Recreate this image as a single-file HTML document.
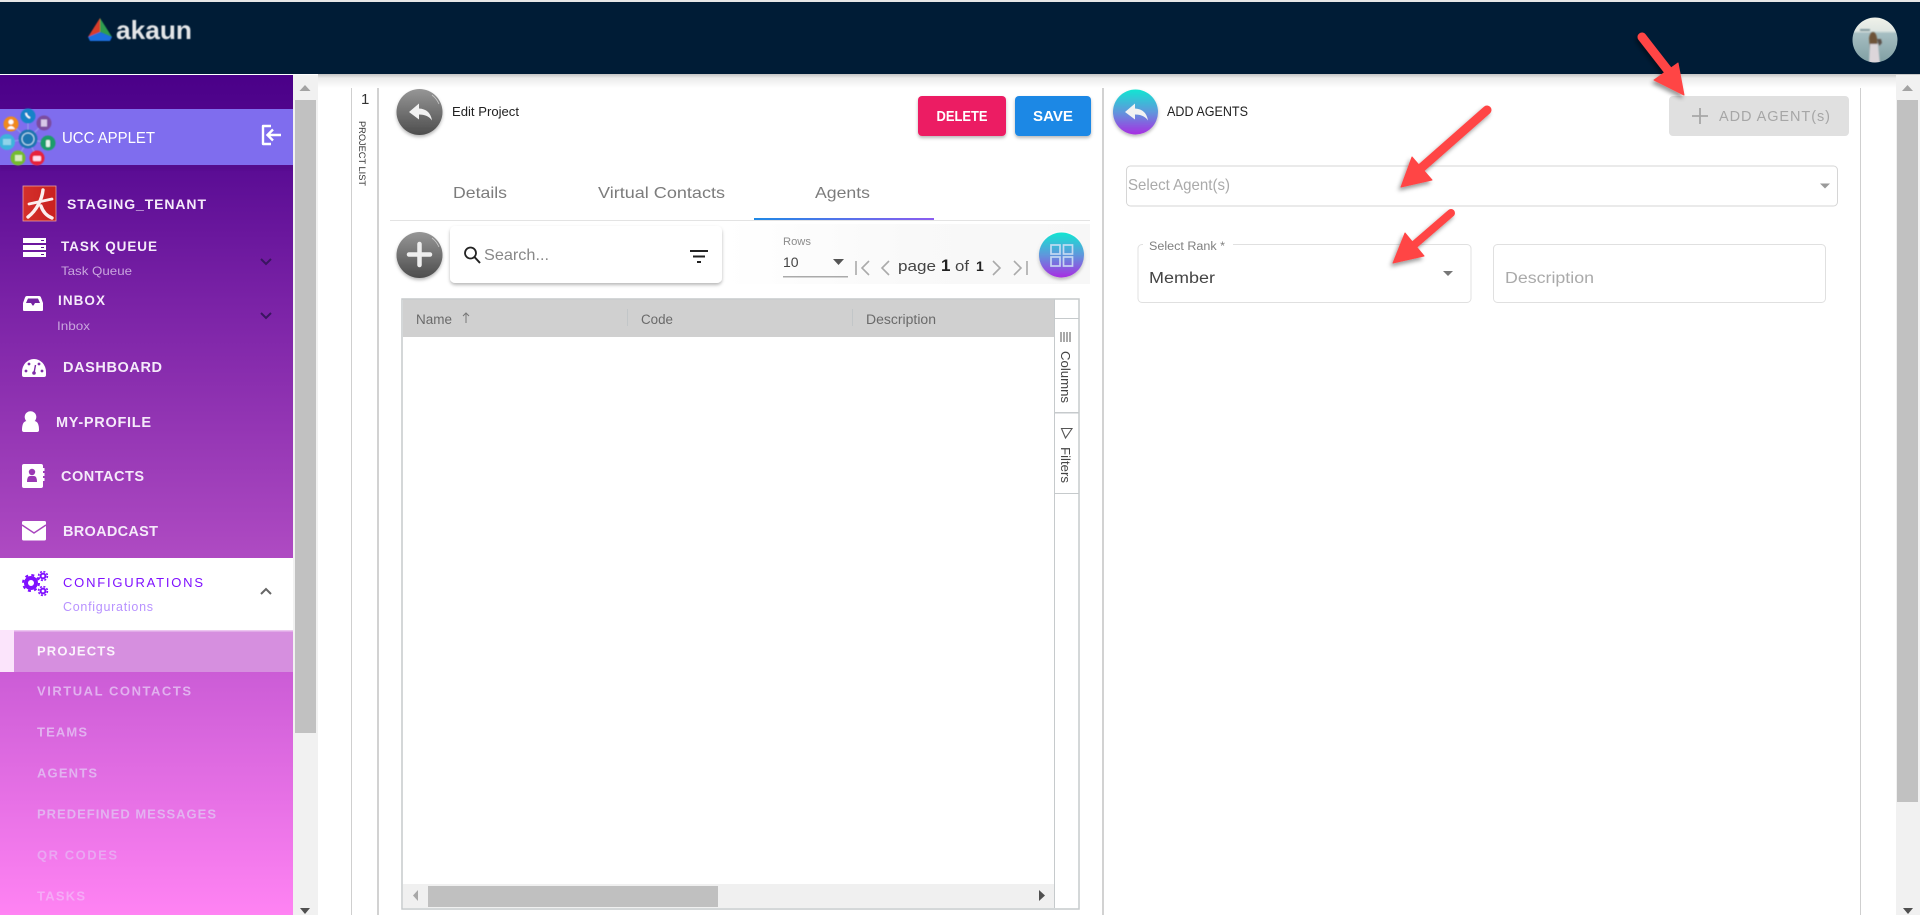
<!DOCTYPE html>
<html><head><meta charset="utf-8"><title>UCC Applet</title>
<style>
html,body{margin:0;padding:0;background:#fff;width:1920px;height:915px;overflow:hidden}
svg{display:block}
text{font-family:"Liberation Sans",sans-serif}
</style></head><body>
<svg xmlns="http://www.w3.org/2000/svg" width="1920" height="915" viewBox="0 0 1920 915">
<defs>
<linearGradient id="side" x1="0" y1="0" x2="0" y2="1">
<stop offset="0" stop-color="#4a0088"/><stop offset=".11" stop-color="#5a0c94"/><stop offset=".27" stop-color="#7a22a6"/><stop offset=".57" stop-color="#ae4ac2"/><stop offset=".71" stop-color="#cb5cd6"/><stop offset="1" stop-color="#ff83f3"/>
</linearGradient>
<linearGradient id="gray" x1="0" y1="0" x2="0" y2="1"><stop offset="0" stop-color="#969696"/><stop offset="1" stop-color="#4d4d4d"/></linearGradient>
<linearGradient id="teal" x1="0" y1="0" x2="0" y2="1"><stop offset="0" stop-color="#12e6d2"/><stop offset=".5" stop-color="#5f97dc"/><stop offset="1" stop-color="#a82ee2"/></linearGradient>
<linearGradient id="tab" x1="0" y1="0" x2="1" y2="0"><stop offset="0" stop-color="#1e88e5"/><stop offset="1" stop-color="#8b5cf0"/></linearGradient>
<linearGradient id="shade" x1="0" y1="0" x2="0" y2="1"><stop offset="0" stop-color="#c4c4c4"/><stop offset=".3" stop-color="#ececec"/><stop offset="1" stop-color="#fff"/></linearGradient>
<linearGradient id="bar" x1="0" y1="0" x2="1" y2="0"><stop offset="0" stop-color="#fff"/><stop offset=".5" stop-color="#f9f9f9"/><stop offset="1" stop-color="#f7f7f7"/></linearGradient>
<linearGradient id="sea" x1="0" y1="0" x2="0" y2="1"><stop offset="0" stop-color="#f0f2ea"/><stop offset=".3" stop-color="#dfe6e2"/><stop offset=".36" stop-color="#a6bec2"/><stop offset="1" stop-color="#7f9ea2"/></linearGradient>
<linearGradient id="redg" x1="0" y1="0" x2="1" y2="0"><stop offset="0" stop-color="#d4302c"/><stop offset="1" stop-color="#c9201e"/></linearGradient>
<filter id="sh" x="-20%" y="-20%" width="140%" height="140%"><feDropShadow dx="0" dy="2" stdDeviation="1.6" flood-color="#000" flood-opacity=".28"/></filter>
<filter id="ash" x="-30%" y="-30%" width="160%" height="160%"><feDropShadow dx="-2" dy="3" stdDeviation="2" flood-color="#000" flood-opacity=".4"/></filter>
<filter id="soft" x="-10%" y="-10%" width="120%" height="120%"><feGaussianBlur stdDeviation=".45"/></filter>
<filter id="softer" x="-10%" y="-10%" width="120%" height="120%"><feGaussianBlur stdDeviation=".9"/></filter>
<clipPath id="av"><circle cx="1875" cy="40" r="22.5"/></clipPath>
</defs>

<!-- top chrome -->
<rect width="1920" height="915" fill="#fff"/>
<rect x="318" y="74" width="1602" height="14" fill="url(#shade)"/>
<rect width="1920" height="2" fill="#e6e6e6"/>
<rect y="2" width="1920" height="72" fill="#001c36"/>

<!-- logo -->
<g filter="url(#soft)">
<path d="M100 18 L88 37 L100 32 Z" fill="#d93c2a"/>
<path d="M100 18 L112 37 L100 32 Z" fill="#2e9e4f"/>
<path d="M100 32 L88 37 L90 41 L110 41 L112 37 Z" fill="#1f6fe0"/>
<text x="116" y="39" font-size="26" font-weight="700" fill="#e4e6e8" textLength="76" lengthAdjust="spacingAndGlyphs">akaun</text>
</g>

<!-- avatar -->
<g clip-path="url(#av)">
<rect x="1852" y="17" width="46" height="46" fill="url(#sea)"/>
<g filter="url(#softer)">
<rect x="1860" y="29" width="10" height="2" fill="#7f979b"/>
<path d="M1869 38 q1-6 4-6 q3 0 4 6 l1 14 l-8 0 z" fill="#6e5238"/>
<path d="M1877 39 h4 l1 4 l-3 3 z" fill="#5a5048"/>
<path d="M1870 44 h8 l2 20 h-11 z" fill="#dcd6da"/>
</g>
</g>

<!-- sidebar -->
<rect x="0" y="75" width="293" height="840" fill="url(#side)"/>
<rect x="0" y="160" width="293" height="10" fill="#4a0a80" opacity=".3" filter="url(#soft)"/>
<rect x="0" y="109" width="293" height="56" fill="#7f6dee"/>

<!-- UCC icon -->
<g filter="url(#soft)">
<g stroke="#9fb6e8" stroke-width="1" opacity=".7">
<line x1="28" y1="139" x2="28" y2="116"/><line x1="28" y1="139" x2="44" y2="123"/><line x1="28" y1="139" x2="48" y2="143"/><line x1="28" y1="139" x2="37" y2="158"/><line x1="28" y1="139" x2="18" y2="158"/><line x1="28" y1="139" x2="7" y2="142"/><line x1="28" y1="139" x2="11" y2="124"/>
</g>
<circle cx="28" cy="139" r="9.5" fill="#1f74b0"/><circle cx="28" cy="139" r="6" fill="none" stroke="#bfe3f5" stroke-width="1"/>
<circle cx="28" cy="116" r="7.5" fill="#1583c8"/><path d="M26 113 q0 3 4 5" stroke="#fff" stroke-width="1.8" fill="none"/>
<circle cx="44" cy="123" r="7.5" fill="#7a4ba0"/><rect x="41" y="119.500" width="6" height="7" fill="#d8c8e8"/>
<circle cx="48" cy="143" r="7.5" fill="#1f9c6a"/><rect x="46" y="140" width="4" height="7" rx="1" fill="#e4f5ec"/>
<circle cx="37" cy="158" r="7.5" fill="#e8203a"/><rect x="33" y="156" width="8" height="5" rx="1" fill="#fde"/>
<circle cx="18" cy="158" r="7.5" fill="#74bc2e"/><rect x="15" y="155" width="7" height="6" fill="#d8ecc0"/>
<circle cx="7" cy="142" r="8" fill="#3cb4dc"/><rect x="3" y="139" width="8" height="6" fill="#90d4ea"/>
<circle cx="11" cy="124" r="7.5" fill="#f08a1c"/><circle cx="11" cy="122" r="2.5" fill="#fff"/><path d="M7 129 q4-6 8 0z" fill="#fff"/>
</g>

<text x="62" y="143" font-size="16" fill="#fff" textLength="93" lengthAdjust="spacingAndGlyphs">UCC APPLET</text>
<!-- logout icon -->
<path d="M271 126 h-8 v18 h8" fill="none" stroke="#fff" stroke-width="2.4" stroke-linejoin="round"/>
<path d="M268 135 h13 M273 129.500 l-5.500 5.500 l5.500 5.500" fill="none" stroke="#fff" stroke-width="2.4"/>

<!-- tenant -->
<rect x="23" y="186" width="33" height="35" fill="url(#redg)"/>
<rect x="23" y="186" width="33" height="35" fill="none" stroke="#e8a0a0" stroke-width=".8"/>
<g fill="none" stroke="#fbeeee" stroke-linecap="round">
<path d="M43 190 C42 199 37 210 28 217" stroke-width="3.400"/>
<path d="M29 204 L52 199" stroke-width="2.800"/>
<path d="M41 206 C43 212 47 216 52 218" stroke-width="3.400"/>
</g>
<text x="67" y="209" font-size="14" font-weight="700" fill="#f5eafa" textLength="139" lengthAdjust="spacing">STAGING_TENANT</text>

<!-- task queue -->
<g fill="#fff"><rect x="23" y="238" width="23" height="5"/><rect x="23" y="245" width="23" height="5"/><rect x="23" y="252" width="23" height="5"/></g>
<g fill="#5d1590"><rect x="41" y="240" width="3" height="1"/><rect x="41" y="247" width="3" height="1"/><rect x="41" y="254" width="3" height="1"/></g>
<text x="61" y="251" font-size="13.5" font-weight="700" fill="#f5eafa" textLength="96" lengthAdjust="spacing">TASK QUEUE</text>
<text x="61" y="275" font-size="12" fill="#c9a6de" textLength="71" lengthAdjust="spacingAndGlyphs">Task Queue</text>
<path d="M261 259 l5 5 l5-5" fill="none" stroke="#3a1560" stroke-width="2"/>

<!-- inbox -->
<path d="M27 296 h12 q1.500 0 2 1.500 l2 5.500 v7 q0 1-1 1 h-18 q-1 0-1-1 v-7 l2-5.500 q.5-1.500 2-1.500 z" fill="#fff"/>
<path d="M28 298.500 h10 l2 4.500 h-5 l-1.500 2.500 h-1 l-1.500-2.500 h-5 z" fill="#7524a2"/>
<text x="58" y="305" font-size="13.5" font-weight="700" fill="#f5eafa" textLength="47" lengthAdjust="spacing">INBOX</text>
<text x="57" y="330" font-size="12" fill="#c9a6de" textLength="33" lengthAdjust="spacingAndGlyphs">Inbox</text>
<path d="M261 313 l5 5 l5-5" fill="none" stroke="#3a1560" stroke-width="2"/>

<!-- dashboard -->
<path d="M22 372 a12 13 0 0 1 24 0 v3 q0 2-2 2 h-20 q-2 0-2-2 z" fill="#fff"/>
<circle cx="34" cy="373" r="1.800" fill="#7f2ca8"/><path d="M34 373 l1.500-8" stroke="#7f2ca8" stroke-width="1.400"/>
<g fill="#7f2ca8"><circle cx="26" cy="371" r="1.400"/><circle cx="29" cy="364" r="1.400"/><circle cx="39" cy="364" r="1.400"/><circle cx="42" cy="371" r="1.400"/></g>
<text x="63" y="372" font-size="14.5" font-weight="700" fill="#f5eafa" textLength="99" lengthAdjust="spacing">DASHBOARD</text>

<!-- my profile -->
<circle cx="30.500" cy="417" r="5.800" fill="#fff"/>
<path d="M22 430 q0-9 5-9 h7 q5 0 5 9 q0 2-2 2 h-13 q-2 0-2-2z" fill="#fff"/>
<text x="56" y="427" font-size="14.5" font-weight="700" fill="#f5eafa" textLength="95" lengthAdjust="spacing">MY-PROFILE</text>

<!-- contacts -->
<rect x="22" y="464" width="21" height="24" rx="2" fill="#fff"/>
<g fill="#fff"><rect x="42" y="468" width="2.500" height="3"/><rect x="42" y="473" width="2.500" height="3"/><rect x="42" y="478" width="2.500" height="3"/></g>
<circle cx="32" cy="472" r="3.200" fill="#9a38b4"/><path d="M27 482 q0-6 3-6 h4 q3 0 3 6z" fill="#9a38b4"/>
<text x="61" y="481" font-size="14.5" font-weight="700" fill="#f5eafa" textLength="83" lengthAdjust="spacing">CONTACTS</text>

<!-- broadcast -->
<rect x="22" y="521" width="24" height="19.500" rx="1.500" fill="#fff"/>
<path d="M22 525 l12 8 l12-8" fill="none" stroke="#a845be" stroke-width="1.400"/>
<text x="63" y="536" font-size="14.5" font-weight="700" fill="#f5eafa" textLength="95" lengthAdjust="spacing">BROADCAST</text>

<!-- configurations -->
<rect x="0" y="558" width="293" height="72" fill="#fff"/>
<g fill="none" stroke="#7f10ff">
<circle cx="31" cy="583" r="5" stroke-width="4"/><circle cx="31" cy="583" r="8" stroke-width="2" stroke-dasharray="3 3.300"/>
<circle cx="43" cy="576" r="2.400" stroke-width="2"/><circle cx="43" cy="576" r="4.400" stroke-width="1.600" stroke-dasharray="2 1.500"/>
<circle cx="43" cy="591" r="2.400" stroke-width="2"/><circle cx="43" cy="591" r="4.400" stroke-width="1.600" stroke-dasharray="2 1.500"/>
</g>
<text x="63" y="587" font-size="13" fill="#7f10ff" textLength="140" lengthAdjust="spacing">CONFIGURATIONS</text>
<text x="63" y="611" font-size="12.5" fill="#b892ff" textLength="90" lengthAdjust="spacing">Configurations</text>
<path d="M261 594 l5-5 l5 5" fill="none" stroke="#666" stroke-width="2"/>

<!-- projects -->
<rect x="0" y="630" width="293" height="42" fill="#d68fdf"/>
<rect x="0" y="630" width="293" height="1.500" fill="#ecc6f0"/>
<rect x="0" y="630" width="14" height="42" fill="#fbe4fb"/>
<text x="37" y="655.500" font-size="13" font-weight="700" fill="#fbf3fc" textLength="78" lengthAdjust="spacing">PROJECTS</text>
<g font-size="13" font-weight="700" fill="#e3b6f1" opacity=".95">
<text x="37" y="695.500" textLength="154" lengthAdjust="spacing">VIRTUAL CONTACTS</text>
<text x="37" y="736.500" textLength="50" lengthAdjust="spacing">TEAMS</text>
<text x="37" y="777.500" textLength="60" lengthAdjust="spacing">AGENTS</text>
<text x="37" y="818.500" textLength="179" lengthAdjust="spacing">PREDEFINED MESSAGES</text>
</g>
<text x="37" y="859.500" font-size="13" font-weight="700" fill="#eaa6f2" textLength="80" lengthAdjust="spacing">QR CODES</text>
<text x="37" y="900.500" font-size="13" font-weight="700" fill="#f5aaf6" textLength="48" lengthAdjust="spacing">TASKS</text>

<!-- left scrollbar -->
<rect x="293" y="75" width="25" height="840" fill="#f1f1f1"/>
<rect x="295" y="100" width="21" height="633" fill="#c1c1c1"/>
<path d="M299.500 91 h11 l-5.500-6 z" fill="#a3a3a3"/>
<path d="M300 908 h10 l-5 6 z" fill="#505050"/>

<!-- right scrollbar -->
<rect x="1896" y="75" width="24" height="840" fill="#f1f1f1"/>
<rect x="1897" y="100" width="21" height="702" fill="#c1c1c1"/>
<path d="M1902 91 h11 l-5.500-6 z" fill="#a3a3a3"/>
<path d="M1903 908 h10 l-5 6 z" fill="#505050"/>

<!-- panel lines -->
<rect x="351" y="88" width="1" height="827" fill="#cfcfcf"/>
<rect x="377" y="88" width="2" height="827" fill="#d2d2d2"/>
<rect x="1102" y="88" width="2" height="827" fill="#d2d2d2"/>
<rect x="1860" y="88" width="1" height="827" fill="#cfcfcf"/>

<text x="361" y="104" font-size="15" fill="#333">1</text>
<text transform="translate(359,121) rotate(90)" font-size="9.500" fill="#333" textLength="65" lengthAdjust="spacingAndGlyphs">PROJECT LIST</text>

<!-- edit project -->
<circle cx="419.500" cy="112" r="23" fill="url(#gray)" filter="url(#sh)"/>
<path d="M432 95 a23 23 0 0 1 7 9" fill="none" stroke="#c8c8c8" stroke-width=".8"/>
<path d="M409 112 l10-8.500 v5 q11 .5 13 12 q-4-6-13-6 v5 z" fill="#f2f2f2"/>
<text x="452" y="116" font-size="13" fill="#222" textLength="67" lengthAdjust="spacingAndGlyphs">Edit Project</text>

<rect x="918" y="96" width="88" height="40" rx="4" fill="#ec1f63" filter="url(#sh)"/>
<text x="962" y="121" font-size="14.500" font-weight="700" fill="#fff" text-anchor="middle" textLength="51" lengthAdjust="spacingAndGlyphs">DELETE</text>
<rect x="1015" y="96" width="76" height="40" rx="4" fill="#1e88e5" filter="url(#sh)"/>
<text x="1053" y="121" font-size="14.500" font-weight="700" fill="#fff" text-anchor="middle" textLength="40" lengthAdjust="spacingAndGlyphs">SAVE</text>

<!-- tabs -->
<rect x="390" y="220" width="700" height="1" fill="#e3e3e3"/>
<rect x="754" y="218" width="180" height="2" fill="url(#tab)"/>
<g font-size="16" fill="#7c7c7c">
<text x="453" y="198" textLength="54" lengthAdjust="spacingAndGlyphs">Details</text>
<text x="598" y="198" textLength="127" lengthAdjust="spacingAndGlyphs">Virtual Contacts</text>
<text x="815" y="198" textLength="55" lengthAdjust="spacingAndGlyphs">Agents</text>
</g>

<!-- toolbar -->
<rect x="725" y="224" width="365" height="60" fill="url(#bar)"/>
<circle cx="419.500" cy="255" r="23" fill="url(#gray)" filter="url(#sh)"/>
<path d="M432 238 a23 23 0 0 1 7 9" fill="none" stroke="#c8c8c8" stroke-width=".8"/>
<path d="M419.500 244 v21 M409 254.500 h21" stroke="#eeeeee" stroke-width="4.500" stroke-linecap="round"/>
<rect x="450" y="226" width="272" height="57" rx="5" fill="#fff" filter="url(#sh)"/>
<circle cx="470.500" cy="253" r="5.500" fill="none" stroke="#222" stroke-width="1.800"/>
<path d="M474.500 257 l5.500 6" stroke="#222" stroke-width="2"/>
<text x="484" y="260" font-size="16" fill="#888" textLength="65" lengthAdjust="spacingAndGlyphs">Search...</text>
<path d="M690 251 h18 M693 256.500 h12 M697 262 h4" stroke="#222" stroke-width="2"/>

<text x="783" y="245" font-size="11" fill="#8c8c8c" textLength="28" lengthAdjust="spacingAndGlyphs">Rows</text>
<text x="783" y="267" font-size="14" fill="#444">10</text>
<path d="M833 259 h11 l-5.500 6 z" fill="#555"/>
<rect x="783" y="276" width="65" height="1.500" fill="#aaa"/>
<g fill="none" stroke="#aaa" stroke-width="1.600">
<path d="M856 261 v14 M869 261 l-7 7 l7 7"/>
<path d="M889 261 l-7 7 l7 7"/>
<path d="M993 261 l7 7 l-7 7"/>
<path d="M1014 261 l7 7 l-7 7 M1027 261 v14"/>
</g>
<text x="898" y="271" font-size="15" fill="#444" textLength="38" lengthAdjust="spacingAndGlyphs">page</text>
<text x="941" y="271" font-size="17" font-weight="700" fill="#222">1</text>
<text x="955" y="271" font-size="15" fill="#444" textLength="14" lengthAdjust="spacingAndGlyphs">of</text>
<text x="976" y="271" font-size="14" font-weight="700" fill="#222">1</text>

<circle cx="1061.500" cy="255" r="24" fill="#fff" opacity=".7"/>
<circle cx="1061.500" cy="255" r="22.500" fill="url(#teal)" filter="url(#sh)"/>
<g fill="none" stroke="#cfe0f5" stroke-width="1.700" opacity=".9">
<rect x="1051" y="245" width="9" height="9"/><rect x="1063.500" y="245" width="9" height="9"/><rect x="1051" y="257" width="9" height="9"/><rect x="1063.500" y="257" width="9" height="9"/>
</g>

<!-- grid -->
<rect x="402" y="299" width="677" height="610" fill="#fff" stroke="#c6cacc" stroke-width="1.500"/>
<rect x="403" y="299.500" width="651" height="37.500" fill="#d0d0d0"/>
<rect x="627" y="309" width="1" height="17" fill="#c2c6c8"/>
<rect x="852" y="309" width="1" height="17" fill="#c2c6c8"/>
<g font-size="13.500" fill="#6a6a6a">
<text x="416" y="324" textLength="36" lengthAdjust="spacingAndGlyphs">Name</text>
<text x="641" y="324" textLength="32" lengthAdjust="spacingAndGlyphs">Code</text>
<text x="866" y="324" textLength="70" lengthAdjust="spacingAndGlyphs">Description</text>
</g>
<path d="M466 323 v-10 M463 316 l3-3 l3 3" fill="none" stroke="#777" stroke-width="1"/>

<!-- tool panel -->
<rect x="1054" y="299" width="1" height="609" fill="#c6cacc"/>
<rect x="1054" y="318" width="25" height="1" fill="#c6cacc"/>
<rect x="1054" y="412" width="25" height="1.500" fill="#c6cacc"/>
<rect x="1054" y="493" width="25" height="1" fill="#c6cacc"/>
<path d="M1061 332 v10 M1064 332 v10 M1067 332 v10 M1070 332 v10" stroke="#555" stroke-width="1"/>
<text transform="translate(1061,351) rotate(90)" font-size="12.500" fill="#444" textLength="52" lengthAdjust="spacingAndGlyphs">Columns</text>
<path d="M1061.500 428.500 H1072 L1068 434.500 L1065.500 438 Z" fill="none" stroke="#555" stroke-width="1.100"/>
<text transform="translate(1061,447) rotate(90)" font-size="12.500" fill="#444" textLength="36" lengthAdjust="spacingAndGlyphs">Filters</text>

<!-- horizontal scrollbar -->
<rect x="403" y="884" width="651" height="24" fill="#f0f0f0"/>
<rect x="428" y="886" width="290" height="21" fill="#c0c0c0"/>
<path d="M418 890 v11 l-5-5.500 z" fill="#a8a8a8"/>
<path d="M1039 890 v11 l6-5.500 z" fill="#505050"/>

<!-- add agents panel -->
<circle cx="1135.500" cy="112" r="22.500" fill="url(#teal)" filter="url(#sh)"/>
<path d="M1125 112 l10-8.500 v5 q11 .5 13 12 q-4-6-13-6 v5 z" fill="#f2f2f2"/>
<text x="1167" y="116" font-size="13.500" fill="#222" textLength="81" lengthAdjust="spacingAndGlyphs">ADD AGENTS</text>

<rect x="1669" y="96" width="180" height="40" rx="4" fill="#e0e0e0"/>
<path d="M1700 108 v16 M1692 116 h16" stroke="#a6a6a6" stroke-width="1.800"/>
<text x="1719" y="121" font-size="14.500" fill="#a6a6a6" textLength="111" lengthAdjust="spacing">ADD AGENT(s)</text>

<rect x="1126.500" y="166" width="711" height="40" rx="4" fill="#fff" stroke="#d6d6d6"/>
<text x="1128" y="190" font-size="16" fill="#aaa" textLength="102" lengthAdjust="spacingAndGlyphs">Select Agent(s)</text>
<path d="M1820 183.500 h10 l-5 5 z" fill="#9a9a9a"/>

<path d="M1143 244.500 h-1 a4 4 0 0 0 -4 4 v50 a4 4 0 0 0 4 4 h325 a4 4 0 0 0 4-4 v-50 a4 4 0 0 0-4-4 h-234" fill="none" stroke="#e0e0e0"/>
<text x="1149" y="250" font-size="11.500" fill="#808080" textLength="76" lengthAdjust="spacingAndGlyphs">Select Rank *</text>
<text x="1149" y="283" font-size="15.500" fill="#444" textLength="66" lengthAdjust="spacingAndGlyphs">Member</text>
<path d="M1443 271 h10 l-5 5 z" fill="#777"/>

<rect x="1493.500" y="244.500" width="332" height="58" rx="4" fill="#fff" stroke="#e0e0e0"/>
<text x="1505" y="283" font-size="15.500" fill="#aaa" textLength="89" lengthAdjust="spacingAndGlyphs">Description</text>

<!-- red arrows -->
<g filter="url(#ash)" fill="#ff4545" stroke="#ff4545" stroke-linejoin="round">
<path d="M1642 37 L1670 73" fill="none" stroke-width="9" stroke-linecap="round"/>
<path d="M1684 95 L1678 63 L1654 80 Z" stroke-width="1"/>
<path d="M1487 110 L1420 169" fill="none" stroke-width="9" stroke-linecap="round"/>
<path d="M1401 187 L1412 157 L1432 180 Z" stroke-width="1"/>
<path d="M1451 213 L1414 245" fill="none" stroke-width="8" stroke-linecap="round"/>
<path d="M1393 263 L1405 233 L1424 256 Z" stroke-width="1"/>
</g>
</svg>
</body></html>
